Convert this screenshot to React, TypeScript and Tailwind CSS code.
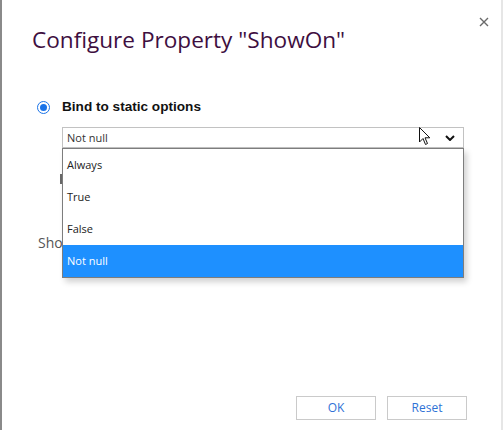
const options = ["Always", "True", "False", "Not null"];

const App = () => {
  const selected = "Not null";
  return (
    <div className="relative w-[503px] h-[430px] bg-white border-l-2 border-[#8a8a8a] font-['Open_Sans',sans-serif] overflow-hidden">
      <div className="absolute right-0 top-0 h-full w-[2px] bg-[#e6e6e6]" />
      {/* close */}
      <button className="absolute left-[476px] top-[16px] w-[12px] h-[12px] text-[#666]">
        <svg viewBox="0 0 12 12" className="w-[12px] h-[12px]">
          <path d="M2 2 L10 10 M10 2 L2 10" stroke="#6a6a6a" strokeWidth="1.4" fill="none" />
        </svg>
      </button>

      <div className="flex flex-col pl-[30px] pr-[38px]">
        <h1 className="mt-[23px] text-[22.6px] leading-[33px] text-[#3e0f3f]">
          Configure Property "ShowOn"
        </h1>

        <div className="mt-[41px] flex items-center gap-[12px] pl-[5px]">
          <span className="w-[13px] h-[13px] rounded-full border-[1.5px] border-[#1a73e8] flex items-center justify-center">
            <span className="w-[7px] h-[7px] rounded-full bg-[#1a73e8]" />
          </span>
          <span className="text-[13.6px] font-bold text-[#111] font-['Liberation_Sans',sans-serif]">Bind to static options</span>
        </div>

        <div className="relative ml-[30px] mt-[10px] w-[402px]">
          <div className="h-[21px] border border-[#c2c2c2] flex items-center justify-between pl-[4px] pr-[8px] bg-white">
            <span className="text-[11px] text-[#333]">{selected}</span>
            <svg viewBox="0 0 10 6" className="w-[10px] h-[6px]">
              <path d="M1 1 L5 5 L9 1" stroke="#111" strokeWidth="2" fill="none" />
            </svg>
          </div>

          {/* options list overlaying the form */}
          <ul className="absolute left-0 top-[21px] w-[402px] border border-[#7d7d7d] bg-white shadow-[3px_4px_6px_rgba(0,0,0,0.18)] z-10">
            {options.map((o) => (
              <li
                key={o}
                className={`h-[32px] flex items-center pl-[4px] text-[11px] ${
                  o === selected ? "bg-[#1e90ff] text-white" : "text-[#222]"
                }`}
              >
                {o}
              </li>
            ))}
          </ul>

          {/* mouse pointer */}
          <svg viewBox="0 0 12 19" className="absolute left-[357px] top-[0px] w-[12px] h-[19px] z-20">
            <path d="M0.5 0.5 L0.5 15 L4 11.5 L6.5 17.5 L8.5 16.5 L6 10.8 L10.8 10.8 Z" fill="white" stroke="#111" strokeWidth="1" />
          </svg>
        </div>

        <div className="ml-[28px] mt-[26px] w-[2px] h-[10px] bg-[#6a6a6a]" />

        <p className="mt-[48px] ml-[6px] text-[14px] text-[#555]">Show</p>
      </div>

      <div className="absolute left-[294px] top-[396px] flex gap-[11px]">
        <button className="w-[80px] h-[24px] border border-[#cacaca] text-[12px] text-[#2f72d6] bg-white">OK</button>
        <button className="w-[80px] h-[24px] border border-[#cacaca] text-[12px] text-[#2f72d6] bg-white">Reset</button>
      </div>
    </div>
  );
};

export default App;
